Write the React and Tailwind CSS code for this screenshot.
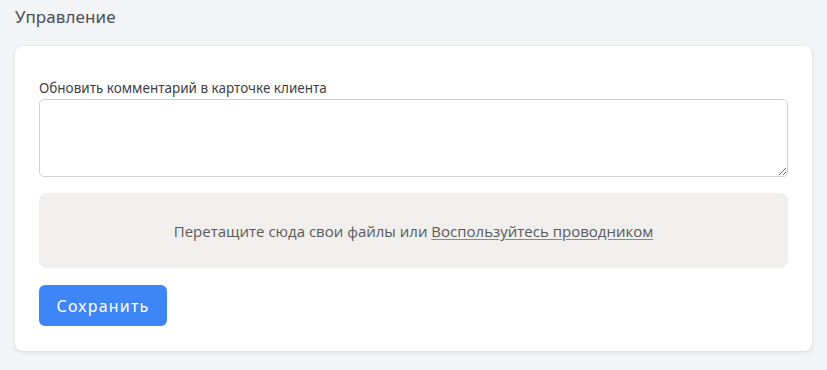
export default function App() {
  return (
    <div className="min-h-[370px] bg-[#f3f4f6] px-[15px] pt-[6px] pb-[19px] font-['Noto_Sans',sans-serif]">
      <h2 className="text-[17px] leading-[22px] tracking-[0.1px] text-[#4b4f56] mb-[18px]">Управление</h2>

      <div className="bg-white rounded-[8px] shadow-[0_1px_4px_rgba(0,0,0,0.12)] px-[24px] pt-[33px] pb-[25px]">
        <label className="block text-[13.5px] leading-[18px] text-[#3f4247] mb-[2px]">
          Обновить комментарий в карточке клиента
        </label>
        <textarea className="block w-full h-[78px] rounded-[5px] border border-[#cfd0d6] bg-white outline-none" />

        {/* Drop zone */}
        <div className="mt-[16px] h-[75px] rounded-[8px] bg-[#f0efed] flex items-center justify-center pt-[2px] text-[15px] text-[#5a5a5a] font-['Open_Sans',sans-serif]">
          <span>
            Перетащите сюда свои файлы или{' '}
            <span className="underline underline-offset-2 decoration-[#8a8a8a]">Воспользуйтесь проводником</span>
          </span>
        </div>

        <button
          type="button"
          className="mt-[17px] w-[128px] h-[41px] rounded-[6px] bg-[#3e85f7] text-white text-[16px] tracking-[1.2px]"
        >
          Сохранить
        </button>
      </div>
    </div>
  );
}
